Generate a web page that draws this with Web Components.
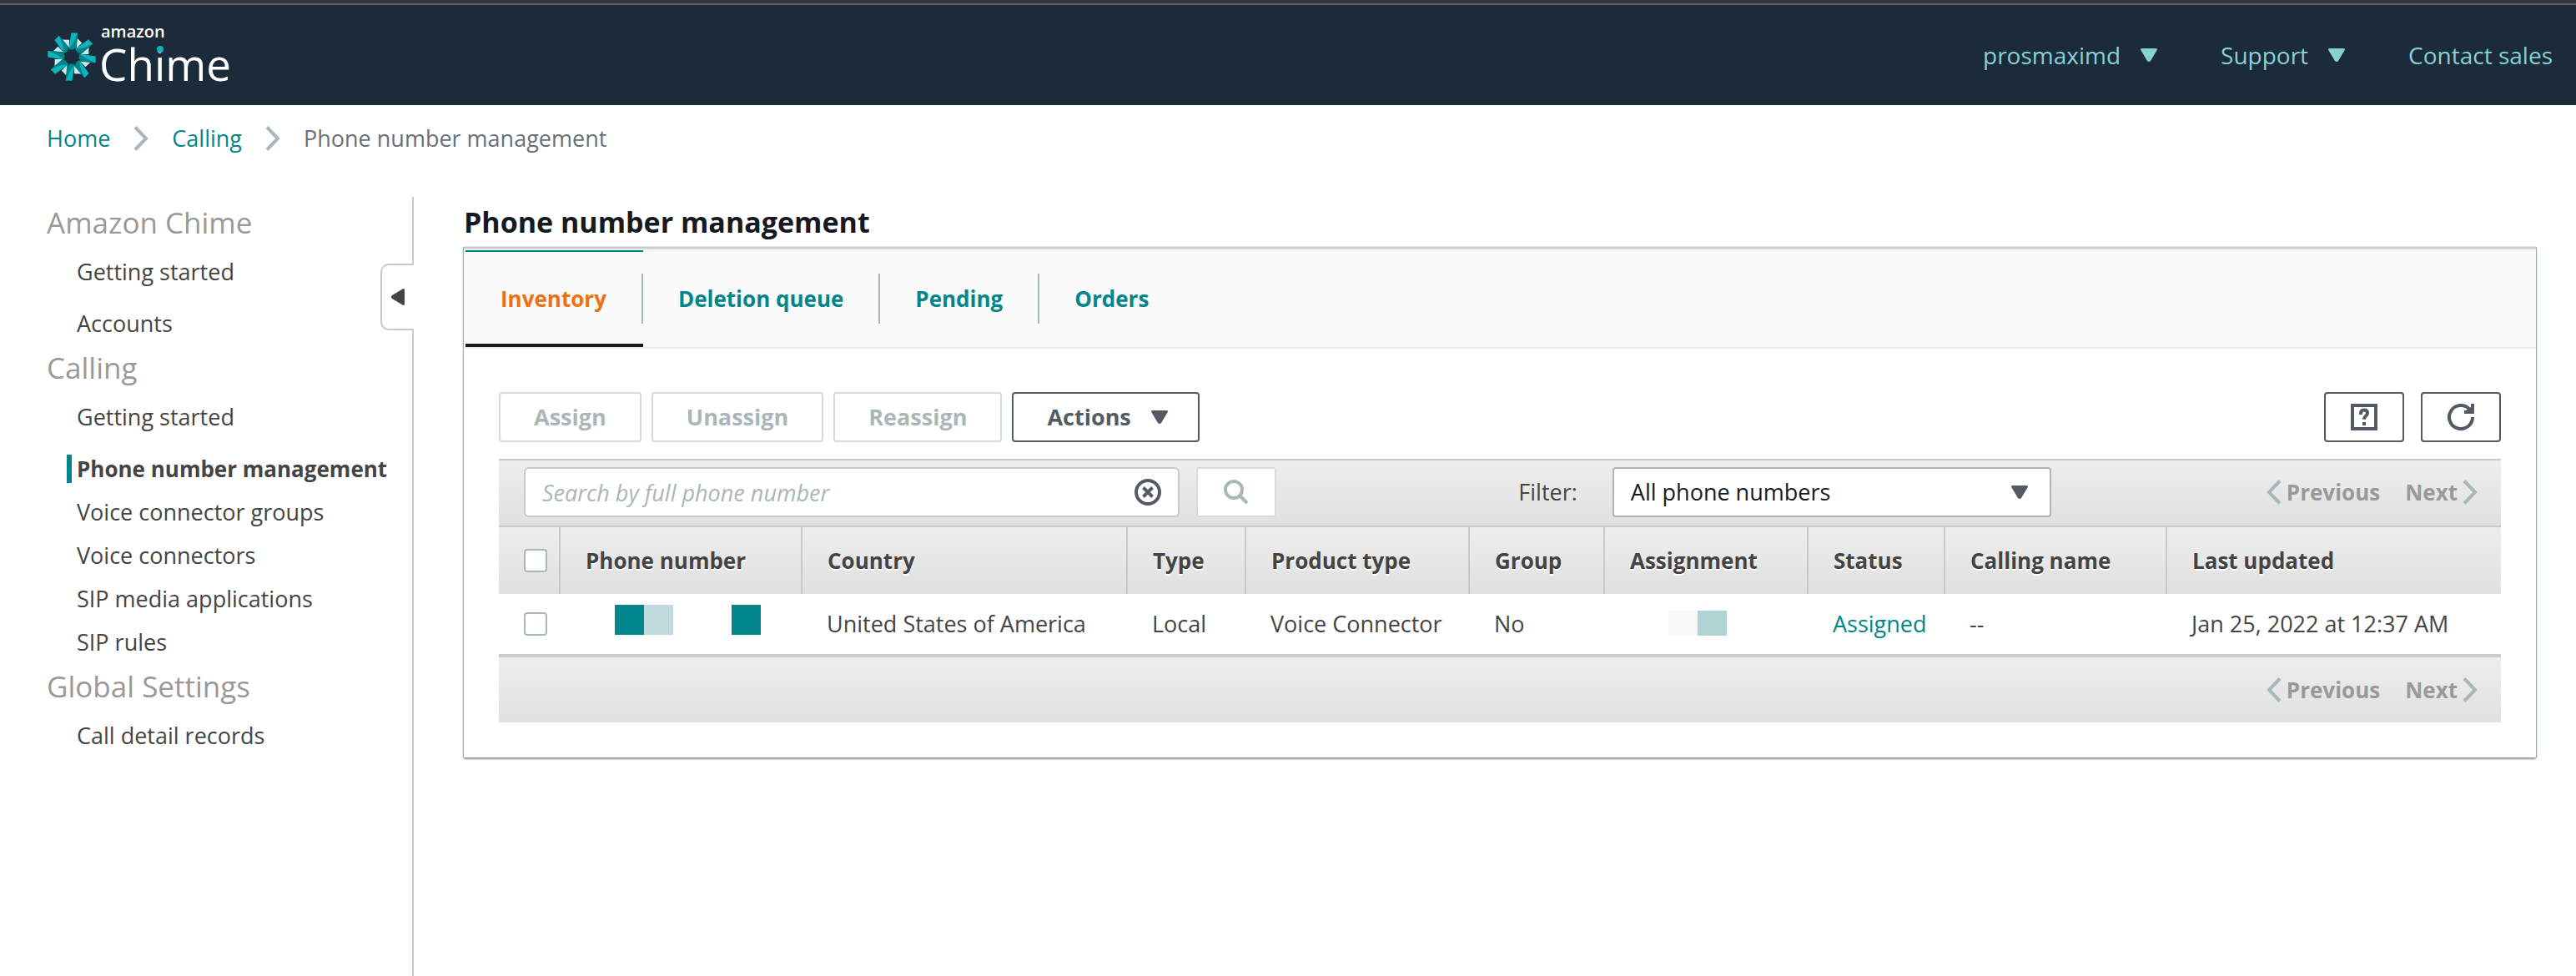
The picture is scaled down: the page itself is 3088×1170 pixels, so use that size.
<!DOCTYPE html>
<html lang="en">
<head>
<meta charset="utf-8">
<title>Phone number management</title>
<style>
  html, body { height: 100%; margin: 0; }
  body {
    font: 500 27px/36px "Open Sans", "Noto Sans", sans-serif;
    color: #444;
    background: #fff;
    --teal: #00868b;
    --slate: #545b64;
    --mist: #aab7b8;
  }
</style>
</head>
<body>
<chime-console>
  <chime-header slot="header">
    <chime-menu>prosmaximd</chime-menu>
    <chime-menu>Support</chime-menu>
    <chime-menu plain>Contact sales</chime-menu>
  </chime-header>
  <chime-breadcrumbs slot="crumbs"></chime-breadcrumbs>
  <chime-sidebar slot="nav">
    <chime-nav-group heading="Amazon Chime">
      <chime-nav-item first>Getting started</chime-nav-item>
      <chime-nav-item>Accounts</chime-nav-item>
    </chime-nav-group>
    <chime-nav-group heading="Calling">
      <chime-nav-item first>Getting started</chime-nav-item>
      <chime-nav-item active>Phone number management</chime-nav-item>
      <chime-nav-item>Voice connector groups</chime-nav-item>
      <chime-nav-item>Voice connectors</chime-nav-item>
      <chime-nav-item>SIP media applications</chime-nav-item>
      <chime-nav-item>SIP rules</chime-nav-item>
    </chime-nav-group>
    <chime-nav-group heading="Global Settings">
      <chime-nav-item>Call detail records</chime-nav-item>
    </chime-nav-group>
  </chime-sidebar>
  <chime-panel heading="Phone number management">
    <chime-tabs slot="tabs">
      <chime-tab active>Inventory</chime-tab>
      <chime-tab>Deletion queue</chime-tab>
      <chime-tab>Pending</chime-tab>
      <chime-tab last>Orders</chime-tab>
    </chime-tabs>
    <chime-actions></chime-actions>
    <chime-filter-bar></chime-filter-bar>
    <chime-number-table></chime-number-table>
    <chime-table-footer></chime-table-footer>
  </chime-panel>
</chime-console>

<script>
const RESET = `*,:host{box-sizing:border-box} button,input,select{font:inherit;margin:0} a{color:inherit;text-decoration:none} svg{display:block;flex:none}`;

function define(name, render) {
  customElements.define(name, class extends HTMLElement {
    constructor() {
      super();
      this.attachShadow({ mode: 'open' });
    }
    connectedCallback() {
      const t = document.createElement('template');
      t.innerHTML = `<style>${RESET}</style>` + render(this);
      this.shadowRoot.replaceChildren(t.content.cloneNode(true));
    }
  });
}

const caret = `<svg width="20" height="16" viewBox="0 0 20 16"><path d="M2 0h16q3 0 1.500 2.500l-7.500 12.500q-2 2-4 0L.5 2.500Q-1 0 2 0z" fill="currentColor"/></svg>`;
const chevron = (left) => `<svg width="18" height="30" viewBox="0 0 18 30" fill="none" stroke="#aab7b8" stroke-width="4"><path d="${left ? 'M16 1.500L3 15l13 13.500' : 'M2 1.500L15 15 2 28.500'}"/></svg>`;

define('chime-console', () => `
  <style>
    :host { display: flex; flex-direction: column; min-height: 100%; }
    .body { display: flex; flex: 1; margin-top: 30px; }
    main { flex: 1; min-width: 0; padding: 0 48px 40px 60px; }
  </style>
  <slot name="header"></slot>
  <slot name="crumbs"></slot>
  <div class="body"><slot name="nav"></slot><main><slot></slot></main></div>`);

define('chime-header', () => {
  let blades = '';
  for (let i = 0; i < 8; i++) blades += `
    <g transform="rotate(${i * 45 + 1})">
      <path d="M18 -68L36 -50L16 -30z" fill="#c5ecea"/>
      <path d="M20 -86L17 -34L4 -25L-11 -27L6 -56z" fill="#00848a"/>
      <path d="M-3 -86H20L6 -52L-11 -27z" fill="#0cb5bd"/>
    </g>`;
  return `
  <style>
    :host { display: block; border-top: 4px solid #35363a; color: #87d1d6; font-size: 28px; }
    header { display: flex; align-items: center; justify-content: space-between;
      height: 122px; padding: 0 28px 0 56px; border-top: 2px solid #5f6062; background: #1b2b39; }
    nav { display: flex; gap: 76px; }
  </style>
  <header>
    <a href="#" aria-label="Amazon Chime home">
      <svg width="230" height="100" viewBox="0 0 230 100">
        <g transform="translate(30 52) scale(.334)">${blades}</g>
        <text x="65" y="29" fill="#fff" font-family="Open Sans" font-weight="600" font-size="20">amazon</text>
        <text x="63" y="81" fill="#fff" font-family="Open Sans" font-weight="400" font-size="53">Chime</text>
        <circle cx="136" cy="43" r="4" fill="#0cb5bd"/>
      </svg>
    </a>
    <nav><slot></slot></nav>
  </header>`;
});

define('chime-menu', (el) => `
  <style>
    :host { display: block; }
    a, button { display: flex; align-items: center; gap: 24px; padding: 0; border: 0; background: none; color: inherit; }
  </style>
  ${el.hasAttribute('plain') ? '<a href="#"><slot></slot></a>' : `<button type="button"><slot></slot>${caret}</button>`}`);

define('chime-breadcrumbs', () => `
  <style>
    :host { display: block; }
    nav { display: flex; align-items: center; gap: 28px; height: 80px; padding: 0 56px; color: #687078; }
    a { color: var(--teal); }
  </style>
  <nav aria-label="Breadcrumb">
    <a href="#">Home</a>${chevron()}<a href="#">Calling</a>${chevron()}<span>Phone number management</span>
  </nav>`);

define('chime-sidebar', () => `
  <style>
    :host { display: block; position: relative; flex: none; width: 496px; padding-top: 4px; border-right: 2px solid #c9c9c9; }
    button { position: absolute; top: 80px; right: -2px; display: flex; align-items: center; justify-content: center;
      width: 40px; height: 80px; padding: 0; color: #444; background: #fff;
      border: 2px solid #c9c9c9; border-right: 0; border-radius: 10px 0 0 10px; }
  </style>
  <nav><slot></slot></nav>
  <button type="button" aria-label="Collapse navigation">
    <svg width="16" height="20" viewBox="0 0 16 20"><path d="M16 2v16q0 3-2.500 1.500L1 12q-2-2 0-4L13.500.5Q16-1 16 2z" fill="currentColor"/></svg>
  </button>`);

define('chime-nav-group', (el) => `
  <style>
    :host { display: block; }
    h2 { margin: 0; padding: 0 0 6px 56px; font-size: 35px; font-weight: 500; line-height: 54px; color: #999; }
  </style>
  <h2>${el.getAttribute('heading')}</h2><slot></slot>`);

define('chime-nav-item', () => `
  <style>
    :host { display: flex; align-items: center; height: 52px; padding-left: 80px; white-space: nowrap; }
    :host([first]) { margin-bottom: 10px; }
    a { padding-left: 6px; border-left: 6px solid transparent; line-height: 34px; }
    :host([active]) a { border-color: var(--teal); font-size: 26px; font-weight: 700; }
  </style>
  <a href="#"><slot></slot></a>`);

define('chime-panel', (el) => `
  <style>
    :host { display: block; }
    h1 { margin: 0; font-size: 34px; line-height: 60px; color: #16191f; }
    section { background: #fff; border-top: 2px solid #c9cbcb; box-shadow: 0 2px 2px #879196, 1px 0 1px #aab7b8, -1px 0 1px #aab7b8; }
    .content { padding: 52px 42px 42px; }
  </style>
  <h1>${el.getAttribute('heading')}</h1>
  <section>
    <slot name="tabs"></slot>
    <div class="content"><slot></slot></div>
  </section>`);

define('chime-tabs', () => `
  <style>
    :host { display: block; }
    nav { display: flex; height: 120px; padding-left: 2px; background: #fafafa;
      border-top: 2px solid #eaeded; border-bottom: 2px solid #eaeded; }
  </style>
  <nav><slot></slot></nav>`);

define('chime-tab', () => `
  <style>
    :host { display: flex; align-items: center; font-size: 26px; font-weight: 700; color: var(--teal); }
    :host([active]) { color: #ec7211; border-top: 2px solid var(--teal); padding-bottom: 2px; box-shadow: inset 0 -4px #16191f; }
    a { padding: 0 42px; line-height: 60px; border-right: 2px solid var(--mist); }
    :host([last]) a { border: 0; }
  </style>
  <a href="#"><slot></slot></a>`);

define('chime-actions', () => `
  <style>
    :host { display: flex; gap: 12px; margin-bottom: 20px; }
    button { display: flex; align-items: center; justify-content: center; gap: 24px; height: 60px; padding: 0 40px;
      font-size: 27px; font-weight: 700; color: var(--slate); background: #fff; border: 2px solid var(--slate); border-radius: 4px; }
    button:disabled { color: var(--mist); border-color: #d5dbdb; }
    .icons { display: flex; gap: 20px; margin-left: auto; }
    .icons button { width: 96px; padding: 0; }
    .menu { padding: 0 36px 0 40px; }
  </style>
  <button type="button" disabled>Assign</button>
  <button type="button" disabled>Unassign</button>
  <button type="button" disabled>Reassign</button>
  <button type="button" class="menu" aria-haspopup="menu">Actions ${caret}</button>
  <div class="icons">
    <button type="button" aria-label="Help">
      <svg width="32" height="32" viewBox="0 0 32 32" fill="none" stroke="currentColor" stroke-width="4">
        <rect x="2" y="2" width="28" height="28"/>
        <path d="M12 13v-1.500q0-4 4-4t4 3.500q0 2-2 3.700-2 1.600-2 4"/><path d="M16 22v4"/>
      </svg>
    </button>
    <button type="button" aria-label="Refresh">
      <svg width="32" height="32" viewBox="0 0 32 32" fill="none" stroke="currentColor" stroke-width="4">
        <path d="M30 16A14 14 0 1 1 26.500 6.800"/><path d="M20 10h10V0"/><path d="M22 8l6-4v5z" fill="currentColor" stroke="none"/>
      </svg>
    </button>
  </div>`);

define('chime-pagination', () => `
  <style>
    :host { display: flex; gap: 30px; font-size: 26px; font-weight: 700; }
    button { display: flex; align-items: center; gap: 6px; padding: 0; border: 0; background: none; color: #999; }
  </style>
  <button type="button" disabled>${chevron(true)}Previous</button>
  <button type="button" disabled>Next${chevron()}</button>`);

define('chime-filter-bar', () => `
  <style>
    :host { display: flex; align-items: flex-start; height: 80px; padding: 8px 28px 0 30px;
      border-top: 2px solid #c9c9c9; background: linear-gradient(#eee, #e0e0e0); }
    .search { display: flex; align-items: center; flex: 0 1 786px; height: 60px; padding: 0 20px;
      background: #fff; border: 2px solid #c9c9c9; border-radius: 6px; }
    input { flex: 1; min-width: 0; height: 56px; padding: 0; border: 0; outline: 0; background: none; color: #444; }
    input::placeholder { color: var(--mist); font-style: italic; opacity: 1; }
    button { padding: 0; border: 0; background: none; color: var(--slate); }
    .go { display: grid; place-items: center; width: 96px; height: 60px; margin-left: 20px; color: var(--mist);
      background: #fff; border: 2px solid #d5dbdb; border-radius: 4px; }
    label { margin-left: auto; margin-right: 42px; line-height: 60px; }
    .pick { display: grid; align-items: center; width: 526px; height: 60px; margin-right: 258px; color: var(--slate); }
    .pick > * { grid-area: 1 / 1; }
    .pick svg { justify-self: end; margin-right: 28px; pointer-events: none; }
    select { appearance: none; width: 100%; height: 60px; padding: 0 20px; color: #16191f; background: #fff;
      border: 2px solid var(--mist); border-radius: 4px; }
    chime-pagination { line-height: 60px; }
  </style>
  <div class="search">
    <input type="text" aria-label="Search by full phone number" placeholder="Search by full phone number">
    <button type="button" aria-label="Clear search">
      <svg width="32" height="32" viewBox="0 0 32 32" fill="none" stroke="currentColor" stroke-width="4">
        <circle cx="16" cy="16" r="14"/><path d="M10.500 10.500l11 11M21.500 10.500l-11 11"/>
      </svg>
    </button>
  </div>
  <button class="go" type="button" aria-label="Search" disabled>
    <svg width="30" height="30" viewBox="0 0 30 30" fill="none" stroke="currentColor" stroke-width="4">
      <circle cx="12" cy="12" r="10"/><path d="M18.500 18.500L28 28"/>
    </svg>
  </button>
  <label for="filter">Filter:</label>
  <div class="pick">
    <select id="filter"><option>All phone numbers</option><option>Assigned</option><option>Unassigned</option></select>
    ${caret}
  </div>
  <chime-pagination></chime-pagination>`);

define('chime-number-table', () => {
  const heads = ['Phone number', 'Country', 'Type', 'Product type', 'Group', 'Assignment', 'Status', 'Calling name', 'Last updated'];
  const widths = [290, 0, 142, 268, 162, 244, 164, 266, 400];
  return `
  <style>
    :host { display: block; }
    table { width: 100%; table-layout: fixed; border-collapse: separate; border-spacing: 0; white-space: nowrap; }
    thead { background: linear-gradient(#eee, #e0e0e0); }
    th { height: 82px; padding: 0 0 0 30px; font-size: 26px; text-align: left; text-shadow: 0 2px #fff;
      border-top: 2px solid #c9c9c9; border-right: 2px solid #c9c9c9; }
    th:last-child { border-right: 0; }
    td { height: 76px; padding: 0 0 0 29px; border-bottom: 4px solid #ccc; }
    td:first-child { padding-left: 30px; }
    td a { color: var(--teal); }
    input { display: block; appearance: none; width: 28px; height: 28px; background: #fff; border: 2px solid var(--mist); border-radius: 4px; }
    .mask { display: flex; }
    .mask i { width: 35px; height: 36px; }
    .phone { padding: 0 0 10px 36px; }
    .who { padding: 0 0 2px 47px; }
    .who i { height: 30px; }
  </style>
  <table>
    <colgroup><col style="width:74px">${widths.map((w) => w ? `<col style="width:${w}px">` : '<col>').join('')}</colgroup>
    <thead><tr>
      <th><input type="checkbox" aria-label="Select all numbers"></th>
      ${heads.map((h) => `<th scope="col">${h}</th>`).join('')}
    </tr></thead>
    <tbody><tr>
      <td><input type="checkbox" aria-label="Select number"></td>
      <td><div class="mask phone"><i style="background:#00868b"></i><i style="background:#bfd9dc"></i><i></i><i></i><i style="background:#00868b"></i></div></td>
      <td>United States of America</td>
      <td>Local</td>
      <td>Voice Connector</td>
      <td>No</td>
      <td><div class="mask who"><i style="background:#f9fbfa"></i><i style="background:#b0d3d4"></i></div></td>
      <td><a href="#">Assigned</a></td>
      <td>--</td>
      <td>Jan 25, 2022 at 12:37 AM</td>
    </tr></tbody>
  </table>`;
});

define('chime-table-footer', () => `
  <style>
    :host { display: flex; align-items: center; justify-content: flex-end; height: 78px; padding-right: 28px;
      background: linear-gradient(#eee, #e0e0e0); }
  </style>
  <chime-pagination></chime-pagination>`);
</script>
</body>
</html>
